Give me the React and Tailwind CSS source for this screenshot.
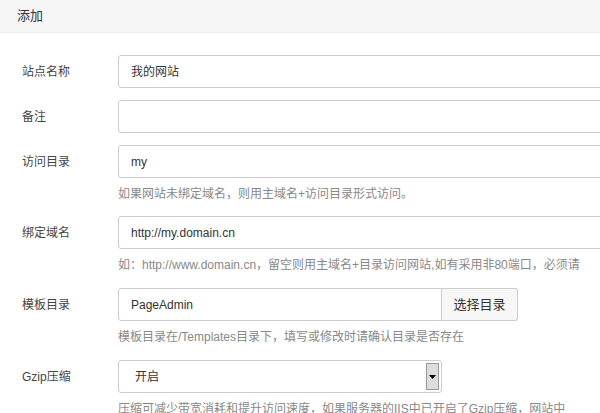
const font = { fontFamily: '"Liberation Sans", "Noto Sans CJK SC", sans-serif' }

function Row({ label, children, help, mt = 'mt-3' }) {
  return (
    <div className={`flex ${mt}`}>
      <div className="w-[118px] shrink-0 pl-[22px] h-[33px] flex items-center text-[12px] text-[#444]">{label}</div>
      <div className="flex-1 min-w-0">
        {children}
        {help && <div className="mt-[7px] text-[12px] text-[#888] whitespace-nowrap">{help}</div>}
      </div>
    </div>
  )
}

const input = 'h-[33px] border border-[#ccc] rounded-[3px] bg-white flex items-center px-3 text-[12px] text-[#333]'

export default function App() {
  return (
    <div className="w-[600px] h-[413px] overflow-hidden bg-white" style={font}>
      <div className="h-[33px] bg-[#f5f5f5] border-b border-[#eee] flex items-center pl-[17px] text-[13px] text-[#333]">添加</div>
      <div className="pt-[10px]">
        <Row label="站点名称" mt="mt-[12px]"><div className={`${input} w-[520px]`}>我的网站</div></Row>
        <Row label="备注"><div className={`${input} w-[520px]`}></div></Row>
        <Row label="访问目录" help="如果网站未绑定域名，则用主域名+访问目录形式访问。"><div className={`${input} w-[520px]`}>my</div></Row>
        <Row label="绑定域名" mt="mt-[13px]" help="如：http://www.domain.cn，留空则用主域名+目录访问网站,如有采用非80端口，必须请"><div className={`${input} w-[520px]`}>http://my.domain.cn</div></Row>
        <Row label="模板目录" mt="mt-[14px]" help="模板目录在/Templates目录下，填写或修改时请确认目录是否存在">
          <div className="flex w-[400px]">
            <div className={`${input} flex-1 rounded-r-none`}>PageAdmin</div>
            <div className="h-[33px] w-[76px] border border-l-0 border-[#ccc] rounded-r-[3px] bg-[#f7f7f7] flex items-center justify-center text-[13px] text-[#333]">选择目录</div>
          </div>
        </Row>
        <Row label="Gzip压缩" mt="mt-[14px]" help="压缩可减少带宽消耗和提升访问速度，如果服务器的IIS中已开启了Gzip压缩，网站中">
          <div className={`${input} w-[324px] pr-[2px] justify-between`}>
            <span className="pl-[4px]">开启</span>
            <span className="w-[13px] h-[27px] bg-[#ddd] border border-[#999] flex items-center justify-center">
              <svg width="7" height="4" viewBox="0 0 7 4"><path d="M0 0h7L3.5 4z" fill="#000" /></svg>
            </span>
          </div>
        </Row>
      </div>
    </div>
  )
}
